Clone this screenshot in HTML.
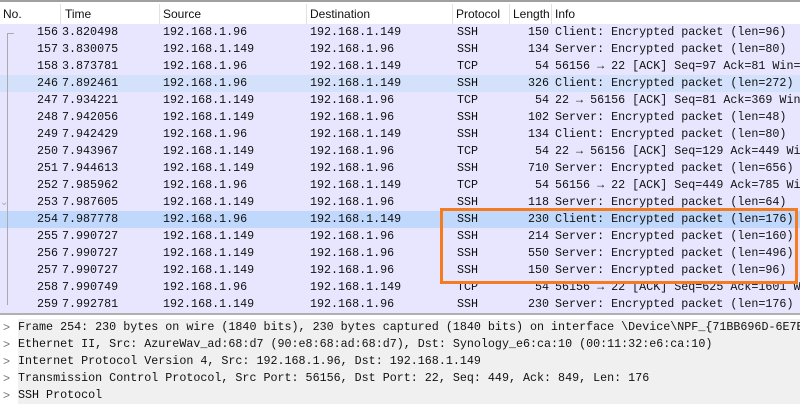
<!DOCTYPE html>
<html><head><style>
html,body{overflow:hidden}
body{margin:0;width:800px;height:419px;overflow:hidden;background:#fff;position:relative;font-family:"Liberation Mono",monospace;font-size:11.7px;color:#111}
.hdr{position:absolute;top:0;left:0;width:800px;height:23px;border-top:2px solid #a0a0a0;border-bottom:1px solid #e0e0e0;background:#fff;font-family:"Liberation Sans",sans-serif;font-size:12px}
.hdr span{position:absolute;top:5px}
.sep{position:absolute;top:2px;height:20px;width:1px;background:#e2e2e2}
#rows{position:absolute;left:0;top:0;width:800px;height:419px;overflow:hidden}
.row{position:absolute;left:0;width:800px;height:17px;background:#e7e6fe;white-space:pre;line-height:17px;overflow:hidden}
.row span{position:absolute;top:0}
.r{text-align:right}
.det{position:absolute;left:0;top:318px;width:800px;height:101px;background:#fff;overflow:hidden}
.dl{position:absolute;left:18px;width:782px;height:17px;background:#f0f0f0;line-height:17px;white-space:pre;overflow:hidden}
.ar{position:absolute;left:3px;color:#777;font-family:"Liberation Sans",sans-serif;font-size:12px;line-height:17px}
</style></head><body>
<div class="hdr">
<span style="left:3px">No.</span><div class="sep" style="left:60px"></div>
<span style="left:65px">Time</span><div class="sep" style="left:159px"></div>
<span style="left:163px">Source</span><div class="sep" style="left:306px"></div>
<span style="left:310px">Destination</span><div class="sep" style="left:452px"></div>
<span style="left:456px">Protocol</span><div class="sep" style="left:509px"></div>
<span style="left:513px">Length</span><div class="sep" style="left:551px"></div>
<span style="left:555px">Info</span>
</div>
<div id="rows"></div>
<div style="position:absolute;left:7px;top:33px;width:1px;height:272px;background:#aaa"></div>
<div style="position:absolute;left:7px;top:33px;width:7px;height:1px;background:#aaa"></div>
<div style="position:absolute;left:0;top:197px;font-size:10px;color:#aaa;font-family:'Liberation Sans',sans-serif">⌄</div>
<div style="position:absolute;left:440px;top:208px;width:352px;height:70px;border:3px solid #f47b20"></div>
<div style="position:absolute;left:0;top:313px;width:800px;height:2px;background:#b0b0b0"></div>
<div class="det">
<div class="ar" style="top:1px">&gt;</div><div class="dl" style="top:1px">Frame 254: 230 bytes on wire (1840 bits), 230 bytes captured (1840 bits) on interface \Device\NPF_{71BB696D-6E7E</div>
<div class="ar" style="top:18px">&gt;</div><div class="dl" style="top:18px">Ethernet II, Src: AzureWav_ad:68:d7 (90:e8:68:ad:68:d7), Dst: Synology_e6:ca:10 (00:11:32:e6:ca:10)</div>
<div class="ar" style="top:35px">&gt;</div><div class="dl" style="top:35px">Internet Protocol Version 4, Src: 192.168.1.96, Dst: 192.168.1.149</div>
<div class="ar" style="top:52px">&gt;</div><div class="dl" style="top:52px">Transmission Control Protocol, Src Port: 56156, Dst Port: 22, Seq: 449, Ack: 849, Len: 176</div>
<div class="ar" style="top:69px">&gt;</div><div class="dl" style="top:69px">SSH Protocol</div>
</div>
<script>
var d=[["156","3.820498","192.168.1.96","192.168.1.149","SSH","150","Client: Encrypted packet (len=96)"],
["157","3.830075","192.168.1.149","192.168.1.96","SSH","134","Server: Encrypted packet (len=80)"],
["158","3.873781","192.168.1.96","192.168.1.149","TCP","54","56156 → 22 [ACK] Seq=97 Ack=81 Win=1026 Len=0"],
["246","7.892461","192.168.1.96","192.168.1.149","SSH","326","Client: Encrypted packet (len=272)"],
["247","7.934221","192.168.1.149","192.168.1.96","TCP","54","22 → 56156 [ACK] Seq=81 Ack=369 Win=1026 Len=0"],
["248","7.942056","192.168.1.149","192.168.1.96","SSH","102","Server: Encrypted packet (len=48)"],
["249","7.942429","192.168.1.96","192.168.1.149","SSH","134","Client: Encrypted packet (len=80)"],
["250","7.943967","192.168.1.149","192.168.1.96","TCP","54","22 → 56156 [ACK] Seq=129 Ack=449 Win=1026 Len=0"],
["251","7.944613","192.168.1.149","192.168.1.96","SSH","710","Server: Encrypted packet (len=656)"],
["252","7.985962","192.168.1.96","192.168.1.149","TCP","54","56156 → 22 [ACK] Seq=449 Ack=785 Win=1024 Len=0"],
["253","7.987605","192.168.1.149","192.168.1.96","SSH","118","Server: Encrypted packet (len=64)"],
["254","7.987778","192.168.1.96","192.168.1.149","SSH","230","Client: Encrypted packet (len=176)"],
["255","7.990727","192.168.1.149","192.168.1.96","SSH","214","Server: Encrypted packet (len=160)"],
["256","7.990727","192.168.1.149","192.168.1.96","SSH","550","Server: Encrypted packet (len=496)"],
["257","7.990727","192.168.1.149","192.168.1.96","SSH","150","Server: Encrypted packet (len=96)"],
["258","7.990749","192.168.1.96","192.168.1.149","TCP","54","56156 → 22 [ACK] Seq=625 Ack=1601 Win=1026 Len=0"],
["259","7.992781","192.168.1.149","192.168.1.96","SSH","230","Server: Encrypted packet (len=176)"]];
var h="";d.forEach(function(r,i){var bg=i==11?"#bfd8fb":(i==3?"#d3e1fb":"#e7e6fe");
h+='<div class="row" style="top:'+(24+17*i)+'px;background:'+bg+'"><span class="r" style="left:20px;width:38px">'+r[0]+'</span><span style="left:62px">'+r[1]+'</span><span style="left:163px">'+r[2]+'</span><span style="left:310px">'+r[3]+'</span><span style="left:457px">'+r[4]+'</span><span class="r" style="left:510px;width:39px">'+r[5]+'</span><span style="left:555px">'+r[6]+'</span></div>';});
document.getElementById("rows").innerHTML=h;
</script>
</body></html>
